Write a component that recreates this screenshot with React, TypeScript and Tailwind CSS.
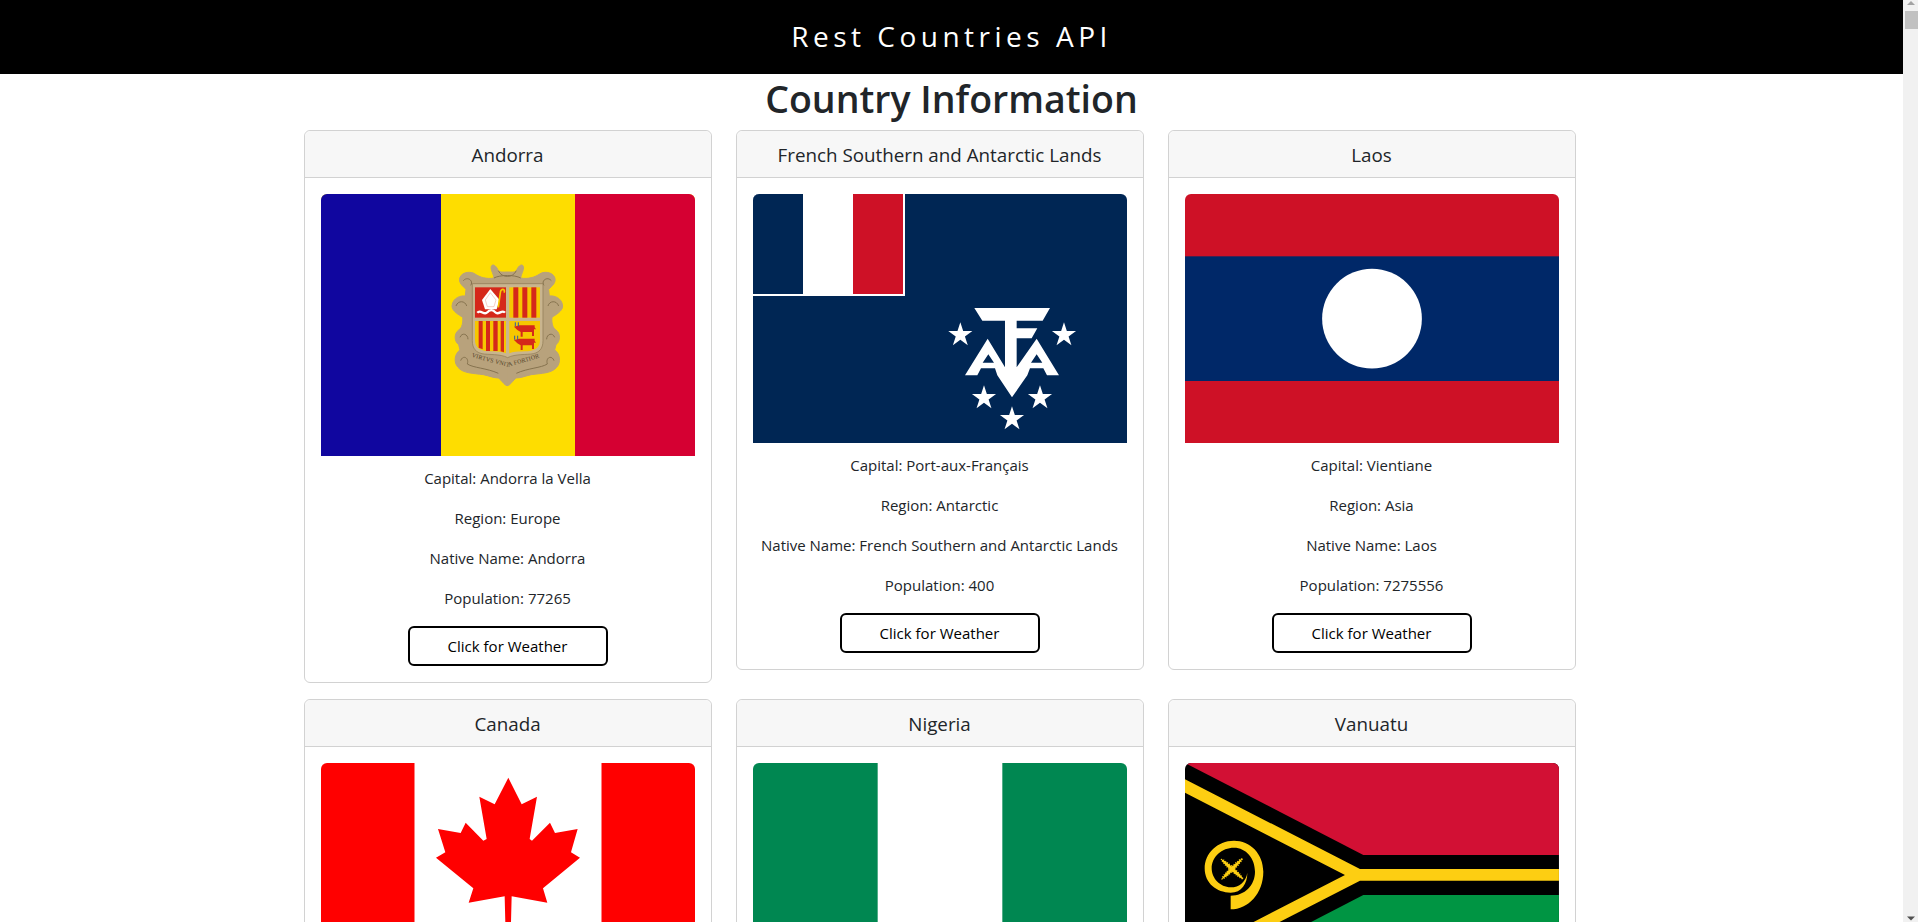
import { ReactNode } from 'react';

function starPoints(cx: number, cy: number, r: number) {
  const pts: string[] = [];
  for (let i = 0; i < 10; i++) {
    const rad = i % 2 === 0 ? r : r * 0.382;
    const a = (Math.PI / 5) * i - Math.PI / 2;
    pts.push(`${cx + rad * Math.cos(a)},${cy + rad * Math.sin(a)}`);
  }
  return pts.join(' ');
}

function AndorraFlag() {
  const leftHalf =
    'M232 66 C218 66 212 68 205 62 C200 50 192 42 186 46 C178 54 190 70 192 84 C170 88 150 82 135 72 C125 64 98 64 90 82 C84 98 98 108 108 118 L106 138 C94 136 68 142 66 168 C66 184 88 195 98 202 C100 216 96 235 86 240 C72 250 72 274 86 284 L90 300 C74 310 70 337 84 352 C98 370 130 370 160 374 C178 378 192 384 205 384 C215 390 222 406 232 407 Z';
  return (
    <svg viewBox="0 0 374 262" className="block w-full rounded-t-md">
      <rect width="374" height="262" fill="#FEDD00" />
      <rect width="120" height="262" fill="#10069F" />
      <rect x="254" width="120" height="262" fill="#D50032" />
      <g transform="translate(109 56) scale(0.3333)">
        <path d={leftHalf} fill="#B8A27C" stroke="#B8A27C" strokeWidth="3" />
        <path d={leftHalf} fill="#B8A27C" stroke="#B8A27C" strokeWidth="3" transform="matrix(-1 0 0 1 464 0)" />
        <g fill="none" stroke="#86724E" strokeWidth="3">
          <path d="M100 92 C112 78 132 92 122 106 M78 168 C84 150 106 152 110 168 M90 262 C96 246 114 252 114 268 M92 332 C98 314 118 322 112 342 C130 354 170 354 205 370" />
          <path d="M364 92 C352 78 332 92 342 106 M386 168 C380 150 358 152 354 168 M374 262 C368 246 350 252 350 268 M372 332 C366 314 346 322 352 342 C334 354 294 354 259 370" />
          <path d="M192 84 C210 74 254 74 272 84 M205 62 C215 85 249 85 259 62" />
        </g>
        <path d="M127 101 H339 V272 C339 297 327 307 310 311 C290 315 256 311 233 323 C210 311 176 315 156 311 C139 307 127 297 127 272 Z" fill="#C9B58E" stroke="#8B7752" strokeWidth="2" />
        <rect x="135" y="112" width="93" height="91" fill="#D5281A" />
        <path d="M181 117 L209 150 L200 178 H165 L156 150 Z" fill="#fff" />
        <path d="M181 128 L198 150 L192 170 H172 L166 150 Z" fill="none" stroke="#E8A090" strokeWidth="1.5" />
        <path d="M205 172 L211 128 C212 114 228 116 222 128" fill="none" stroke="#F6C700" strokeWidth="5" />
        <path d="M142 188 C152 176 162 198 172 187 C178 178 190 178 196 187 C206 198 216 176 225 188" fill="none" stroke="#fff" strokeWidth="7" />
        <rect x="238" y="112" width="92" height="91" fill="#F6C700" />
        <rect x="250" y="112" width="15" height="91" fill="#D5281A" />
        <rect x="277" y="112" width="15" height="91" fill="#D5281A" />
        <rect x="304" y="112" width="15" height="91" fill="#D5281A" />
        <path d="M135 213 H228 V310 C205 300 175 308 155 300 C142 295 135 285 135 270 Z" fill="#F6C700" />
        <path d="M146 213 H158 V298 L146 293 Z M168 213 H180 V303 H168 Z M190 213 H203 V303 H190 Z M212 213 H222 V307 L212 304 Z" fill="#D5281A" />
        <path d="M238 213 H330 V270 C330 285 323 295 310 300 C290 308 260 300 238 310 Z" fill="#F6C700" />
        <g fill="#D5281A">
          <path d="M268 226 H314 V232 L318 238 H312 V258 H306 V246 H278 V260 H272 V246 L262 240 L252 230 Z" />
          <path d="M268 266 H314 V272 L318 278 H312 V297 H306 V286 H278 V300 H272 V286 L262 280 L252 270 Z" />
        </g>
        <path d="M256 217 V229 M265 217 V229 M254 257 V269 M263 257 V269" stroke="#2A5AA8" strokeWidth="3" />
        <path id="andorra-motto" d="M125 320 C160 332 205 342 233 350 C262 342 310 330 345 316" fill="none" />
        <text fontFamily="'Liberation Serif', serif" fontSize="18" fill="#4F3F26" letterSpacing="0.5">
          <textPath href="#andorra-motto">VIRTVS VNITA FORTIOR</textPath>
        </text>
      </g>
    </svg>
  );
}

function TaafFlag() {
  return (
    <svg viewBox="0 0 374 249.33" className="block w-full rounded-t-md">
      <rect width="374" height="249.33" fill="#002654" />
      <rect width="152" height="102" fill="#fff" />
      <rect width="50" height="100" fill="#002654" />
      <rect x="100" width="50" height="100" fill="#CE1126" />
      <g transform="translate(167 66) scale(0.3333)" fill="#fff">
        <path
          fillRule="evenodd"
          d="M163 144 H390 L368 182 H290 V205 H352 L335 235 H290 V322 L350 236 L417 346 H381 L370 325 H330 L322 346 L276 412 L232 346 L225 325 H183 L172 346 H135 L203 236 L255 322 V182 H187 Z M205 283 L188 308 H222 Z M350 283 L333 308 H367 Z"
        />
        <polygon points={starPoints(121, 225, 38)} />
        <polygon points={starPoints(432, 225, 38)} />
        <polygon points={starPoints(192, 414, 38)} />
        <polygon points={starPoints(360, 414, 38)} />
        <polygon points={starPoints(276, 477, 38)} />
      </g>
    </svg>
  );
}

function LaosFlag() {
  return (
    <svg viewBox="0 0 374 249.33" className="block w-full rounded-t-md">
      <rect width="374" height="249.33" fill="#CE1126" />
      <rect y="62.33" width="374" height="124.67" fill="#002868" />
      <circle cx="187" cy="124.67" r="49.87" fill="#fff" />
    </svg>
  );
}

function CanadaFlag() {
  return (
    <svg viewBox="0 0 374 187" className="block w-full rounded-t-md">
      <rect width="374" height="187" fill="#fff" />
      <rect width="93.5" height="187" fill="#FF0000" />
      <rect x="280.5" width="93.5" height="187" fill="#FF0000" />
      <g transform="translate(99 -4) scale(0.3333)" fill="#FF0000">
        <polygon points="265,56 305,136 351,113 329,240 336,245 390,191 405,222 473,210 453,280 480,296 369,388 382,431 275,412 272,530 257,530 254,412 146,431 160,388 48,296 76,280 54,210 122,222 137,191 190,245 200,240 178,113 224,136" />
      </g>
    </svg>
  );
}

function NigeriaFlag() {
  return (
    <svg viewBox="0 0 374 187" className="block w-full rounded-t-md">
      <rect width="374" height="187" fill="#fff" />
      <rect width="124.67" height="187" fill="#008751" />
      <rect x="249.33" width="124.67" height="187" fill="#008751" />
    </svg>
  );
}

function VanuatuFlag() {
  return (
    <svg viewBox="0 0 374 224.4" className="block w-full rounded-t-md">
      <g transform="translate(-25 -73) scale(0.3333)">
        <rect x="75" y="219" width="1122" height="673" fill="#000" />
        <polygon points="75,219 1197,219 1197,495 610,495" fill="#D21034" />
        <polygon points="75,892 1197,892 1197,615 610,615" fill="#009543" />
        <polygon points="75,268 600,537 1197,537 1197,572 600,572 75,842 75,802 555,555 75,308" fill="#FDCE12" />
        <path
          d="M212 658 C265 658 310 610 310 545 C310 490 270 452 222 452 C172 452 134 490 134 535 C134 580 170 608 212 608 C245 608 262 580 262 548 C258 575 238 592 212 592 C180 592 155 565 155 535 C155 500 185 473 222 473 C258 473 285 505 285 545 C285 585 255 617 212 617 Z"
          fill="#FDCE12"
        />
        <g fill="#FDCE12" stroke="#FDCE12" strokeWidth="5" strokeDasharray="3 4">
          <ellipse cx="216" cy="537" rx="42" ry="5" transform="rotate(-45 216 537)" />
          <ellipse cx="216" cy="537" rx="42" ry="5" transform="rotate(42 216 537)" />
        </g>
      </g>
    </svg>
  );
}

type Country = {
  name: string;
  flag: ReactNode;
  capital?: string;
  region?: string;
  native?: string;
  population?: number;
};

const COUNTRIES: Country[] = [
  { name: 'Andorra', flag: <AndorraFlag />, capital: 'Andorra la Vella', region: 'Europe', native: 'Andorra', population: 77265 },
  { name: 'French Southern and Antarctic Lands', flag: <TaafFlag />, capital: 'Port-aux-Français', region: 'Antarctic', native: 'French Southern and Antarctic Lands', population: 400 },
  { name: 'Laos', flag: <LaosFlag />, capital: 'Vientiane', region: 'Asia', native: 'Laos', population: 7275556 },
  { name: 'Canada', flag: <CanadaFlag />, capital: 'Ottawa', region: 'Americas', native: 'Canada', population: 38005238 },
  { name: 'Nigeria', flag: <NigeriaFlag />, capital: 'Abuja', region: 'Africa', native: 'Nigeria', population: 206139587 },
  { name: 'Vanuatu', flag: <VanuatuFlag />, capital: 'Port Vila', region: 'Oceania', native: 'Vanuatu', population: 307150 },
];

function CountryCard({ country }: { country: Country }) {
  return (
    <div className="mr-6 mb-4 self-start rounded-md border border-[#d2d2d2] bg-white">
      <div className="rounded-t-md border-b border-[#d2d2d2] bg-[#f7f7f7] pt-[9px] pb-[7px] text-center text-[18.8px] leading-[30px]">
        {country.name}
      </div>
      <div className="p-4 text-center text-[15px] leading-6">
        <div className="mb-2.5">{country.flag}</div>
        <p className="mb-4">Capital: {country.capital}</p>
        <p className="mb-4">Region: {country.region}</p>
        <p className="mb-4">Native Name: {country.native}</p>
        <p className="mb-4">Population: {country.population}</p>
        <button className="mx-auto block h-10 w-[200px] rounded-md border-2 border-black bg-white text-black">
          Click for Weather
        </button>
      </div>
    </div>
  );
}

export default function App() {
  return (
    <div className="flex h-screen overflow-hidden bg-white font-['Open_Sans',sans-serif] text-[#212529]">
      <main className="min-w-0 flex-1 overflow-hidden">
        <header className="flex h-[74px] items-center justify-center bg-black pb-[3px] text-[28px] tracking-[4.5px] text-white">
          Rest Countries API
        </header>
        <h1 className="mb-2 pt-px text-center text-[37.5px] font-semibold leading-[47px]">Country Information</h1>
        <div className="mx-auto grid w-[1296px] grid-cols-3">
          {COUNTRIES.map((country) => (
            <CountryCard key={country.name} country={country} />
          ))}
        </div>
      </main>
      <aside className="flex w-[15px] shrink-0 flex-col items-end bg-[#f1f1f1]">
        <svg viewBox="0 0 15 11" className="h-[11px] w-[15px] shrink-0">
          <path d="M8 1 L12 5 H4 Z" fill="#a3a3a3" />
        </svg>
        <div className="h-[18px] w-[13px] bg-[#c1c1c1]" />
        <div className="flex-1" />
        <svg viewBox="0 0 15 11" className="h-[11px] w-[15px] shrink-0">
          <path d="M8 9.5 L12 5.5 H4 Z" fill="#505050" />
        </svg>
      </aside>
    </div>
  );
}
